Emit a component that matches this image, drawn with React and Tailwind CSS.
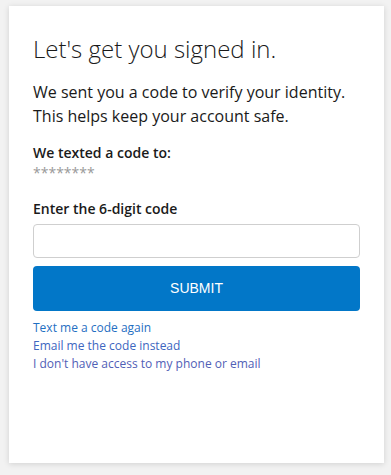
import React, { useState } from 'react';

const links = [
  { label: 'Text me a code again', color: 'text-[#1f6fc2]' },
  { label: 'Email me the code instead', color: 'text-[#3d66bf]' },
  { label: "I don't have access to my phone or email", color: 'text-[#5160b6]' },
];

const App = () => {
  const [code, setCode] = useState('');

  return (
    <div className="min-h-screen bg-[#f2f2f2] pt-[6px] pl-[9px] font-['Open_Sans',sans-serif] text-[#1a1a1a]">
      <div className="w-[375px] h-[457px] bg-white shadow-[0_1px_6px_rgba(0,0,0,0.14)] px-6 pt-[27px]">
        <h1 className="text-[24px] leading-[32px] font-light">Let's get you signed in.</h1>

        <p className="mt-[15px] text-[16px] leading-[24px]">
          We sent you a code to verify your identity.
          <br />
          This helps keep your account safe.
        </p>

        <div className="mt-[15px] text-[14px] leading-[20px]">
          <div className="font-semibold">We texted a code to:</div>
          <div className="text-[#999999] font-medium">********</div>
        </div>

        <label htmlFor="code" className="block mt-[16px] text-[14px] leading-[20px] font-semibold">
          Enter the 6-digit code
        </label>
        <input
          id="code"
          type="text"
          value={code}
          onChange={(e) => setCode(e.target.value)}
          className="block w-full h-[34px] mt-[5px] px-2 border border-[#cfcfcf] rounded-[4px] outline-none"
        />

        <button className="block w-full h-[45px] mt-[8px] rounded-[4px] bg-[#0277c8] text-white text-[14px] font-['Liberation_Sans',Arial,sans-serif]">
          SUBMIT
        </button>

        <div className="mt-[8px] flex flex-col text-[12px] leading-[18px]">
          {links.map((l) => (
            <a key={l.label} href="#" className={l.color}>
              {l.label}
            </a>
          ))}
        </div>
      </div>
    </div>
  );
};

export default App;
